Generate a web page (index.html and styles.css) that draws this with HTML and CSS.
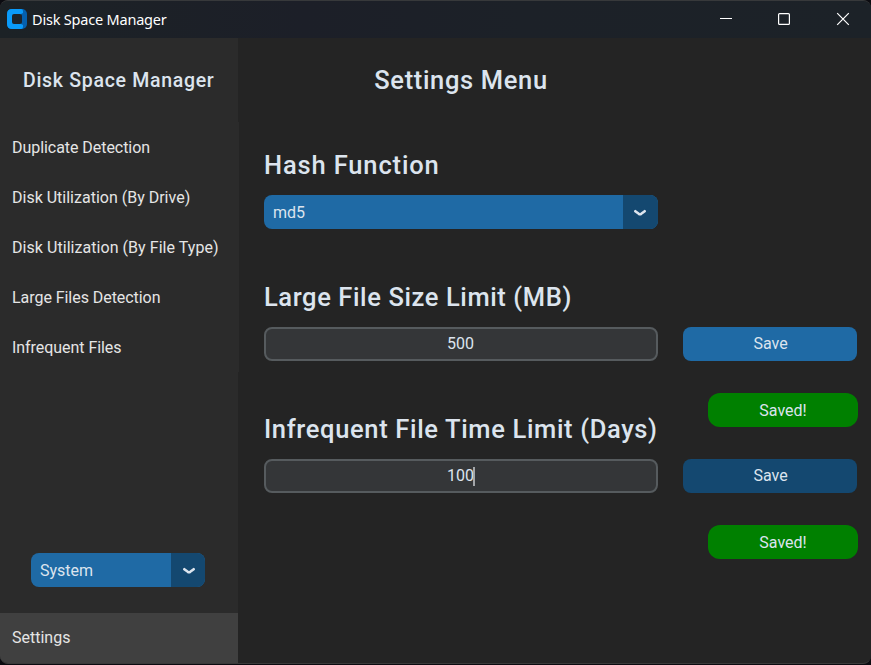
FILE: index.html
```html
<!DOCTYPE html>
<html lang="en">
<head>
<meta charset="utf-8">
<title>Disk Space Manager</title>
<link rel="stylesheet" href="styles.css">
</head>
<body>
<div class="window">
  <header class="titlebar">
    <svg class="logo" width="20" height="20" viewBox="0 0 20 20">
      <rect width="20" height="20" rx="5" fill="#0560ae"/>
      <path d="M5 0H14Q16 0 16 2V4L14 5V15L16 16V18Q16 20 14 20H5Q0 20 0 15V5Q0 0 5 0Z" fill="#0a9bfa"/>
      <rect x="5" y="5" width="10" height="10" rx="2" fill="#1c242b"/>
    </svg>
    <span class="caption">Disk Space Manager</span>
    <div class="controls">
      <svg width="58" height="38" viewBox="0 0 58 38"><path d="M23 17.5H35" stroke="#fff"/></svg>
      <svg width="58" height="38" viewBox="0 0 58 38"><rect x="23.6" y="12.6" width="10.8" height="10.8" rx="1" fill="none" stroke="#fff" stroke-width="1.2"/></svg>
      <svg width="58" height="38" viewBox="0 0 58 38"><path d="M24.2 12.2L35.8 23.8M35.8 12.2L24.2 23.8" stroke="#fff" stroke-width="1.2"/></svg>
    </div>
  </header>
  <div class="body">
    <aside class="sidebar">
      <h1 class="brand">Disk Space Manager</h1>
      <nav class="nav">
        <a class="item">Duplicate Detection</a>
        <a class="item drive">Disk Utilization (By Drive)</a>
        <a class="item wide">Disk Utilization (By File Type)</a>
        <a class="item">Large Files Detection</a>
        <a class="item">Infrequent Files</a>
      </nav>
      <div class="select theme">
        <span class="value">System</span>
        <span class="arrow"><svg width="14" height="8" viewBox="0 0 14 8"><path d="M2.3 2.2L5.8 4.8Q7 5.6 8.2 4.8L11.7 2.2" fill="none" stroke="#dce4ee" stroke-width="2.6" stroke-linecap="round"/></svg></span>
      </div>
      <a class="item active">Settings</a>
    </aside>
    <main class="main">
      <h2 class="title">Settings Menu</h2>
      <div class="form">
        <h3 class="label hash-label">Hash Function</h3>
        <div class="select hash">
          <span class="value">md5</span>
          <span class="arrow"><svg width="14" height="8" viewBox="0 0 14 8"><path d="M2.3 2.2L5.8 4.8Q7 5.6 8.2 4.8L11.7 2.2" fill="none" stroke="#dce4ee" stroke-width="2.6" stroke-linecap="round"/></svg></span>
        </div>
        <h3 class="label size-label">Large File Size Limit (MB)</h3>
        <div class="entry">500</div>
        <div class="button">Save</div>
        <h3 class="label time-label">Infrequent File Time Limit (Days)</h3>
        <div class="toast">Saved!</div>
        <div class="entry">100<i class="caret"></i></div>
        <div class="button pressed">Save</div>
        <div class="toast">Saved!</div>
      </div>
    </main>
  </div>
</div>
</body>
</html>
```
FILE: styles.css
```css
* { box-sizing: border-box; }
body {
  margin: 0;
  height: 665px;
  overflow: hidden;
  background: #0b0b10;
  color: #dce4ee;
  font: 16px/20px Roboto, sans-serif;
}
h1, h2, h3 { margin: 0; font-weight: 540; white-space: nowrap; }
svg { display: block; }
.window {
  height: 664px;
  display: flex;
  flex-direction: column;
  overflow: hidden;
  background: #242424;
  border-top: 1px solid #37393b;
  border-bottom: 1px solid #3a3a3a;
  border-radius: 8px;
}
.titlebar {
  flex: none;
  height: 37px;
  display: flex;
  align-items: center;
  padding-left: 7px;
  background: linear-gradient(90deg, #1c2226, #1c1f28 35%, #1c2128 60%, #1c2228);
}
.logo { margin-top: -1px; }
.caption {
  margin: -2px 0 0 5px;
  color: #fff;
  font: 14.5px/20px "Noto Sans", sans-serif;
  letter-spacing: -0.2px;
}
.controls { margin-left: auto; display: flex; }
.body { flex: 1; display: flex; min-height: 0; }
.sidebar {
  width: 238px;
  display: flex;
  flex-direction: column;
  background: #2b2b2b;
}
.brand {
  height: 84px;
  line-height: 85px;
  padding-left: 23px;
  font-size: 19.5px;
  letter-spacing: 0.7px;
}
.nav { width: 239px; background: #2b2b2b; }
.item {
  display: flex;
  align-items: center;
  height: 50px;
  padding-left: 12px;
  color: #e5e5e5;
  white-space: nowrap;
}
.nav .item { padding-top: 2px; letter-spacing: -0.05px; }
.nav .drive { letter-spacing: 0; }
.nav .wide { letter-spacing: 0.05px; }
.active { background: #404040; }
.select {
  display: flex;
  height: 34px;
  border-radius: 8px;
  overflow: hidden;
  background: #1f6aa5;
  line-height: 36px;
}
.value { flex: 1; padding-left: 9px; }
.arrow {
  width: 35px;
  display: flex;
  align-items: center;
  justify-content: center;
  padding: 2px 1px 0 0;
  background: #144870;
}
.theme { width: 174px; margin: auto 0 26px 31px; }
.theme .arrow { width: 34px; padding: 2px 0 0 2px; }
.main { flex: 1; padding-left: 26px; }
.title {
  width: 394px;
  height: 75px;
  line-height: 85px;
  text-align: center;
  font-size: 25.5px;
  letter-spacing: 0.65px;
}
.form {
  display: grid;
  grid-template-columns: 394px 174px;
  grid-template-rows: repeat(7, 66px);
  column-gap: 25px;
  align-items: center;
}
.label {
  grid-column: 1;
  align-self: end;
  font-size: 25.5px;
  line-height: 28px;
}
.hash-label { letter-spacing: 0.85px; }
.size-label { letter-spacing: 0.6px; }
.time-label { letter-spacing: 0.65px; }
.hash { grid-column: 1; }
.entry {
  grid-column: 1;
  display: flex;
  align-items: center;
  justify-content: center;
  height: 34px;
  padding-right: 1px;
  border: 2px solid #565b5e;
  border-radius: 8px;
  background: #343638;
}
.caret { width: 2px; height: 19px; margin: 0 -1px 0 -1px; background: #a3a6a9; }
.button, .toast {
  grid-column: 2;
  height: 34px;
  border-radius: 8px;
  background: #1f6aa5;
  line-height: 33px;
  text-align: center;
}
.button { padding-left: 1px; }
.pressed { background: #144870; }
.toast {
  width: 150px;
  margin-left: 25px;
  border-radius: 12px;
  background: #008000;
  line-height: 36px;
}
```
